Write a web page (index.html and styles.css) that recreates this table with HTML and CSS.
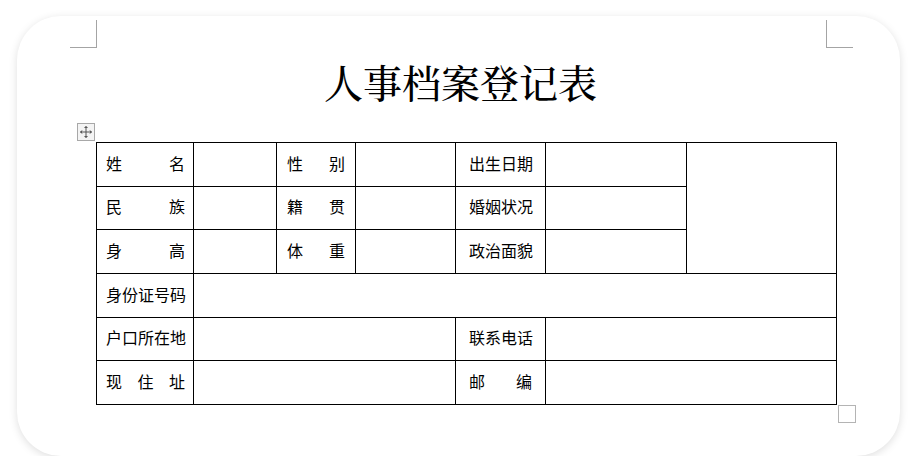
FILE: index.html
```html
<!DOCTYPE html>
<html lang="zh">
<head>
<meta charset="utf-8">
<title>人事档案登记表</title>
<link rel="stylesheet" href="styles.css">
</head>
<body>
<div class="page">
  <span class="crop crop-tl"></span>
  <span class="crop crop-tr"></span>
  <h1 class="title">人事档案登记表</h1>
  <div class="table-wrap">
    <span class="move-handle">
      <svg width="14" height="14" viewBox="0 0 14 14" fill="none" stroke="#555" stroke-width="1">
        <path d="M7 1.5v11M1.5 7h11"/>
        <path d="M5.5 3L7 1.5 8.5 3M5.5 11L7 12.5 8.5 11M3 5.5L1.5 7 3 8.5M11 5.5L12.5 7 11 8.5" fill="#555"/>
      </svg>
    </span>
    <table class="form">
      <colgroup>
        <col class="c1"><col class="c2"><col class="c3"><col class="c4"><col class="c5"><col class="c6"><col class="c7">
      </colgroup>
      <tr class="r44">
        <td class="lab p1"><span>姓名</span></td><td></td>
        <td class="lab p3"><span>性别</span></td><td></td>
        <td class="lab p5"><span>出生日期</span></td><td></td>
        <td rowspan="3"></td>
      </tr>
      <tr class="r43">
        <td class="lab p1"><span>民族</span></td><td></td>
        <td class="lab p3"><span>籍贯</span></td><td></td>
        <td class="lab p5"><span>婚姻状况</span></td><td></td>
      </tr>
      <tr class="r44">
        <td class="lab p1"><span>身高</span></td><td></td>
        <td class="lab p3"><span>体重</span></td><td></td>
        <td class="lab p5"><span>政治面貌</span></td><td></td>
      </tr>
      <tr class="r44">
        <td class="lab p1"><span>身份证号码</span></td><td colspan="6"></td>
      </tr>
      <tr class="r43">
        <td class="lab p1"><span>户口所在地</span></td><td colspan="3"></td>
        <td class="lab p5"><span>联系电话</span></td><td colspan="2"></td>
      </tr>
      <tr class="r44">
        <td class="lab p1"><span>现住址</span></td><td colspan="3"></td>
        <td class="lab p5"><span>邮编</span></td><td colspan="2"></td>
      </tr>
    </table>
    <span class="resize-handle"></span>
  </div>
</div>
</body>
</html>
```

FILE: styles.css
```css
html, body {
  margin: 0;
  padding: 0;
  background: #ffffff;
}

body {
  font-family: "Noto Sans CJK SC", "Noto Sans", sans-serif;
  color: #000;
}

.page {
  position: relative;
  box-sizing: border-box;
  width: 883px;
  height: 440px;
  margin: 16px 0 0 17px;
  background: #fff;
  border-radius: 44px;
  box-shadow: 0 2px 9px rgba(0, 0, 0, 0.13);
  padding-top: 43px;
}

.crop {
  position: absolute;
  top: 4px;
  width: 26px;
  height: 27px;
  border-color: #a4a4a4;
  border-style: solid;
  border-width: 0;
}

.crop-tl {
  left: 53px;
  border-right-width: 1px;
  border-bottom-width: 1px;
}

.crop-tr {
  left: 809px;
  border-left-width: 1px;
  border-bottom-width: 1px;
}

.title {
  margin: 0 0 0 4px;
  text-align: center;
  font-family: "Noto Serif CJK SC", "Noto Sans CJK SC", serif;
  font-weight: 500;
  font-size: 39px;
  line-height: 44px;
  height: 83px;
}

.table-wrap {
  position: relative;
  margin-left: 79px;
  width: 741px;
}

.move-handle {
  position: absolute;
  left: -19px;
  top: -19px;
  width: 16px;
  height: 16px;
  border: 1px solid #a8a8a8;
  background: #f4f4f4;
  display: flex;
  align-items: center;
  justify-content: center;
}

.resize-handle {
  position: absolute;
  left: 742px;
  top: 263px;
  width: 16px;
  height: 16px;
  border: 1px solid #b4b4b4;
  background: #fff;
}

.form {
  border-collapse: collapse;
  table-layout: fixed;
  width: 741px;
  font-size: 16px;
}

.form td {
  border: 1px solid #000;
  padding: 0;
  line-height: 20px;
}

.c1 { width: 97px; }
.c2 { width: 83px; }
.c3 { width: 79px; }
.c4 { width: 100px; }
.c5 { width: 90px; }
.c6 { width: 141px; }
.c7 { width: 150px; }

.r44 { height: 44px; }
.r43 { height: 43px; }

.lab span {
  display: block;
  text-align: justify;
  text-align-last: justify;
  white-space: nowrap;
  padding-bottom: 4px;
}

.p1 { padding: 0 8px 0 9px !important; }
.p3 { padding: 0 10px 0 10px !important; }
.p5 { padding: 0 13px 0 13px !important; }
```
